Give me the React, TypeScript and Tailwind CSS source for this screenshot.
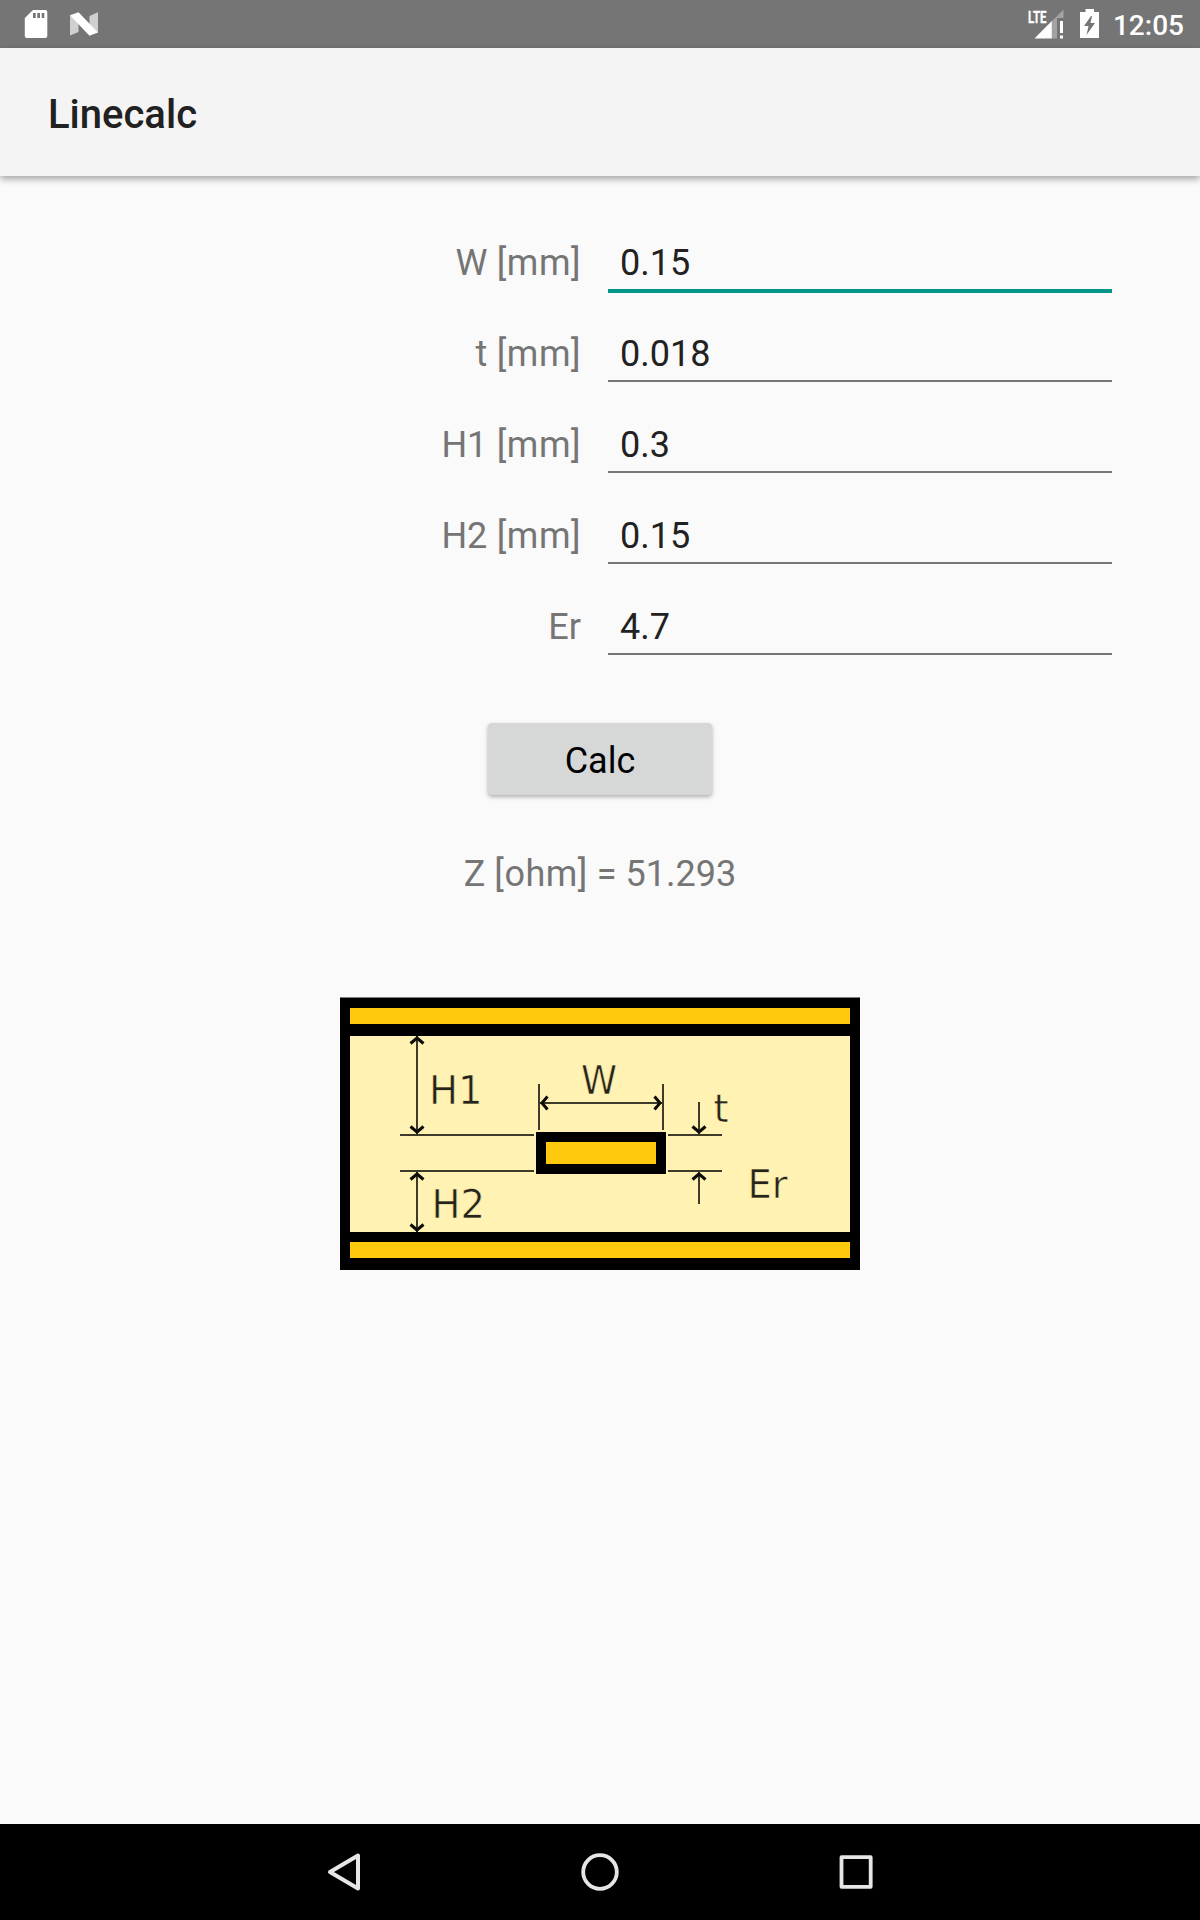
const fields = [
  { name: 'W', unit: '[mm]', value: '0.15', focused: true },
  { name: 't', unit: '[mm]', value: '0.018', focused: false },
  { name: 'H1', unit: '[mm]', value: '0.3', focused: false },
  { name: 'H2', unit: '[mm]', value: '0.15', focused: false },
  { name: 'Er', unit: '', value: '4.7', focused: false },
];

function StatusBar() {
  return (
    <div className="flex h-12 items-center justify-between bg-[#757575]">
      <div className="flex items-center">
        <svg className="ml-6 block" width="24" height="48" viewBox="0 0 24 48">
          <path
            fill="#fff"
            fillRule="evenodd"
            d="M9 10H21.3Q23.3 10 23.3 12V36Q23.3 38 21.3 38H2.800Q.8 38 .8 36V18ZM9 13V18H11.700V13ZM13.300 13V18H16V13ZM17.700 13V18H20.300V13Z"
          />
        </svg>
        <svg className="ml-[22px] block" width="28" height="48" viewBox="0 0 28 48">
          <path fill="#d0d0d0" d="M0 15L8.500 22V32L0 35.500ZM28 12.300L19.500 16V25L28 33Z" />
          <path fill="#fff" d="M0 15.300L8.500 12.300L28 32.500L19.500 35.700Z" />
        </svg>
      </div>
      <div className="flex items-center">
        <svg className="block" width="38" height="48" viewBox="0 0 38 48">
          <text
            x="0"
            y="22.500"
            fontFamily="Roboto"
            fontWeight="700"
            fontSize="17"
            textLength="18.500"
            lengthAdjust="spacingAndGlyphs"
            fill="#fff"
            stroke="#fff"
            strokeWidth="0.300"
          >
            LTE
          </text>
          <path fill="#a3a3a3" d="M35.500 9.500V18H29V38.500H23.500V21.500Z" />
          <path fill="#fff" d="M6.500 38.500L23.800 21V38.500ZM32 21H35V33H32ZM32 35.500H35V38.500H32Z" />
        </svg>
        <svg className="ml-[14px] block" width="20" height="48" viewBox="0 0 20 48">
          <path fill="#fff" fillRule="evenodd" d="M5.500 9H14V12H19V38H0V12H5.500ZM11 16L4 26H8.500L6.500 35L15 23H10.500L12 16Z" />
        </svg>
        <time className="mr-4 ml-3 w-[72px] pt-[3px] text-right text-[28px] leading-8 font-medium text-white">12:05</time>
      </div>
    </div>
  );
}

function Diagram() {
  return (
    <svg className="mx-auto mt-[102px] block" width="520" height="274" viewBox="340 997 520 274">
      <rect x="340" y="997.5" width="520" height="272.5" fill="#000" />
      <rect x="350" y="1008" width="500" height="16" fill="#ffc90e" />
      <rect x="350" y="1036" width="500" height="196" fill="#fff2b3" />
      <rect x="350" y="1242" width="500" height="16" fill="#ffc90e" />
      <rect x="536" y="1132" width="130" height="42" fill="#000" />
      <rect x="546" y="1142" width="110" height="22" fill="#ffc90e" />
      <g fill="none" stroke="#3f3b2b" strokeWidth="2">
        <path d="M417 1036V1135M417 1171V1232M400 1135H534M400 1171H534M668 1135H722M668 1171H722" />
        <path d="M539 1084V1130M663 1084V1130M539 1103H663M699 1102V1135M699 1171V1204" />
      </g>
      <g fill="none" stroke="#0d0c09" strokeWidth="3">
        <path d="M410.500 1043.500L417 1038L423.500 1043.500M410.500 1126.500L417 1132L423.500 1126.500" />
        <path d="M410.500 1179.500L417 1174L423.500 1179.500M410.500 1224.500L417 1230L423.500 1224.500" />
        <path d="M547.500 1096.500L542 1103L547.500 1109.500M654.500 1096.500L660 1103L654.500 1109.500" />
        <path d="M692.500 1126.500L699 1132L705.500 1126.500M692.500 1179.500L699 1174L705.500 1179.500" />
      </g>
      <g fill="#26231c" stroke="#fff2b3" strokeWidth="0.600" fontFamily="'DejaVu Sans', sans-serif" fontSize="38.500">
        <text x="429" y="1104">H1</text>
        <text x="431.500" y="1218">H2</text>
        <text x="581" y="1093.500" textLength="36" lengthAdjust="spacingAndGlyphs">W</text>
        <text x="713.500" y="1122">t</text>
        <text x="747.500" y="1198">Er</text>
      </g>
    </svg>
  );
}

function NavigationBar() {
  return (
    <nav className="flex h-24 items-center justify-center gap-[216px] bg-black">
      <svg width="40" height="40" viewBox="0 0 40 40" fill="none" stroke="#e6e6e6" strokeWidth="4" strokeLinejoin="round">
        <path d="M34 3.500V36.500L6 20Z" />
      </svg>
      <svg width="40" height="40" viewBox="0 0 40 40" fill="none" stroke="#e6e6e6" strokeWidth="3.800">
        <circle cx="20" cy="20" r="16.800" />
      </svg>
      <svg width="40" height="40" viewBox="0 0 40 40" fill="none" stroke="#e6e6e6" strokeWidth="3.800" strokeLinejoin="round">
        <rect x="5.500" y="5.200" width="29.200" height="29.600" />
      </svg>
    </nav>
  );
}

export default function App() {
  return (
    <div className="flex h-[1920px] w-[1200px] flex-col bg-[#fafafa] font-[Roboto,sans-serif]">
      <StatusBar />
      <header className="flex h-32 items-center bg-[#f4f4f4] pl-12 shadow-[0_3px_7px_rgba(0,0,0,0.35)]">
        <h1 className="pt-1.5 text-[40px] leading-[48px] font-medium text-[#212121]">Linecalc</h1>
      </header>
      <main className="flex-1 pt-[57px]">
        {fields.map((f) => (
          <label key={f.name} className="flex h-[91px] gap-[27px] text-4xl leading-[42px]">
            <span className="w-[581px] pt-[9px] text-right text-[#757575]">
              {f.name}
              {f.unit && <span className="tracking-[0.5px]"> {f.unit}</span>}
            </span>
            <span
              className={
                f.focused
                  ? 'h-[60px] w-[504px] border-b-4 border-[#009688] pt-[9px] pl-3 text-[#212121]'
                  : 'h-[58px] w-[504px] border-b-2 border-[#757575] pt-[9px] pl-3 text-[#212121]'
              }
            >
              {f.value}
            </span>
          </label>
        ))}
        <button className="mx-auto mt-[35px] block h-[72px] w-[224px] rounded-[4px] bg-[#d6d7d7] pt-[3px] text-4xl leading-[42px] text-black shadow-[0_2px_4px_rgba(0,0,0,0.3)]">
          Calc
        </button>
        <p className="mt-[58px] text-center text-4xl leading-[42px] text-[#757575]">
          Z <span className="tracking-[0.5px]">[ohm]</span> = 51.293
        </p>
        <Diagram />
      </main>
      <NavigationBar />
    </div>
  );
}
